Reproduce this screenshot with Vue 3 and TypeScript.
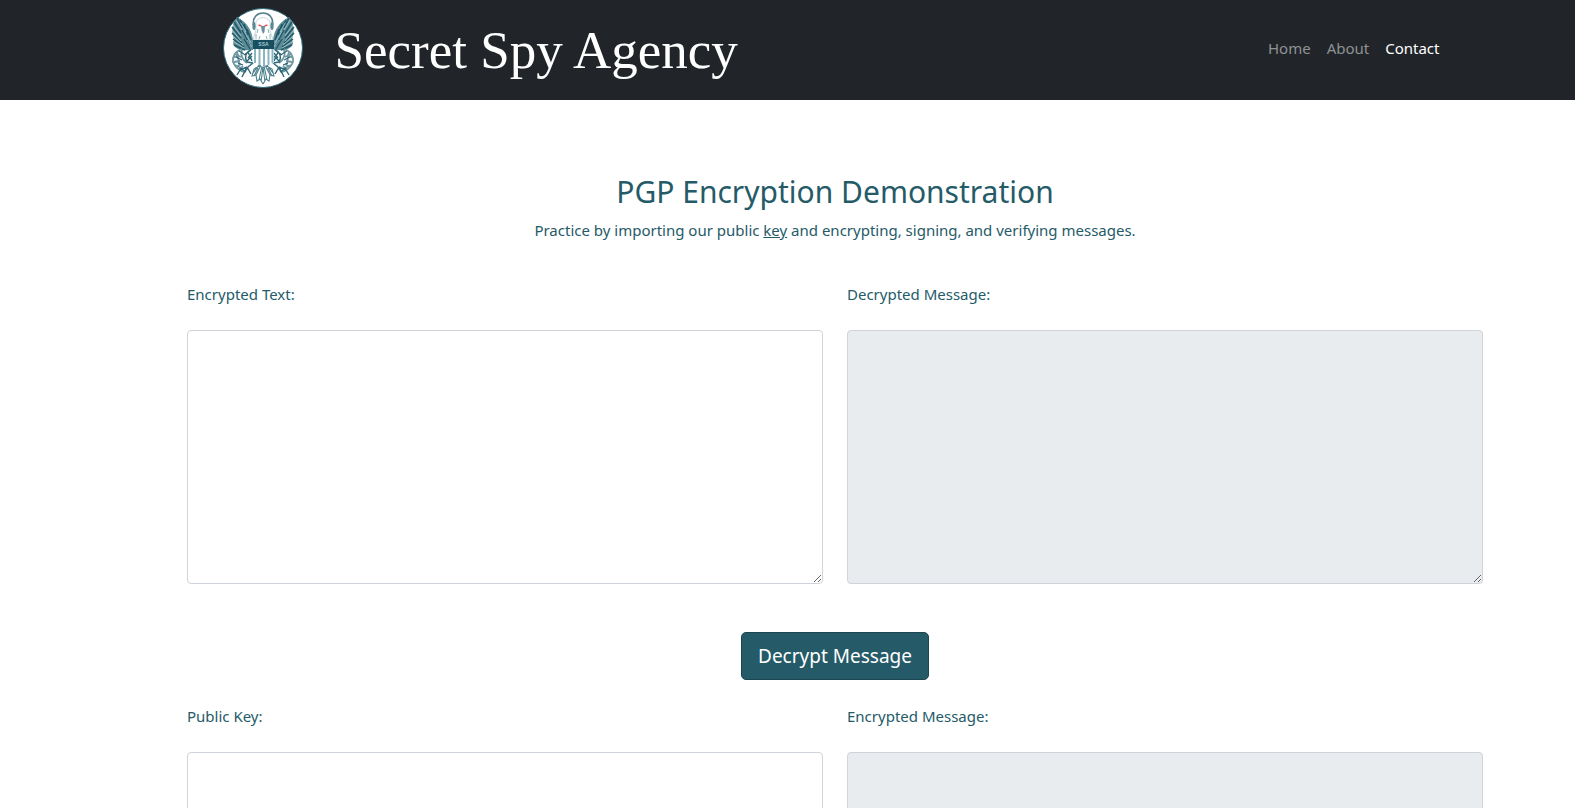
<script setup lang="ts">
import { ref } from 'vue'

interface NavItem {
  label: string
  active: boolean
}

const navItems: NavItem[] = [
  { label: 'Home', active: false },
  { label: 'About', active: false },
  { label: 'Contact', active: true },
]

const encryptedText = ref('')
const decryptedMessage = ref('')
const publicKey = ref('')
const encryptedMessage = ref('')
</script>

<template>
  <header class="navbar">
    <div class="nav-inner">
      <a class="brand" href="#">
        <svg class="seal" viewBox="0 0 80 80" aria-hidden="true">
          <defs>
            <g id="seal-half">
              <path d="M14 9 C9 15 8 24 11 31 L10 36 C13 42 19 43 30 42 L30 32 C29 23 24 14 14 9Z" fill="#5d8b96" />
              <path d="M14 10 L19 20 M11 14 L18 25 M9 19 L18 30 M9 25 L19 35 M10 31 L21 39 M11 37 L22 42 M17 12 L22 21 M21 16 L25 27 M24 21 L28 32 M19 22 L27 37 M21 31 L27 41" fill="none" stroke="#1f5868" stroke-width="1.4" />
              <path d="M13 12 L19 22 M10 17 L18 28 M9 22 L18 33 M10 28 L20 37 M11 34 L21 40 M21 23 L28 35 M18 15 L23 24 M24 32 L29 39" fill="none" stroke="#cfe0e4" stroke-width=".6" />
              <path d="M19 41 C12 43 9 49 10 54 C12 59 16 63 22 64 M14 44 C16 48 14 53 17 57 M19 42 C17 48 20 52 24 55 M10 50 L16 47 M11 54 L17 53 M13 59 L18 56 M16 62 L20 58 M12 46 L18 49 M12 57 L20 61" fill="none" stroke="#6f98a2" stroke-width="1.8" />
              <path d="M16 43 L21 46 M13 49 L19 52 M15 55 L20 57 M17 60 L23 64" fill="none" stroke="#2b6574" stroke-width="1.1" />
              <path d="M28 42 C23 44 21 49 24 54 L30 55 L25 59 L21 65 M29 48 L24 53 M25 44 L29 53 M21 47 L28 42 M24 59 L28 66 M24 59 L17 62 L14 67 M24 59 L19 69 M25 50 L29 45" fill="none" stroke="#2f6977" stroke-width="1.4" />
              <path d="M38 57 L31 61 L29 68 L33 67 L34 73 L37 71 L40 76 M38 57 L33 67 M39 58 L36 72 M36 57 L30 65 M40 59 L38 74 M35 60 L31 68" fill="none" stroke="#4c7f8b" stroke-width="1.1" />
            </g>
          </defs>
          <circle cx="40" cy="40" r="39.5" fill="#fff" stroke="#2e6978" />
          <use href="#seal-half" />
          <use href="#seal-half" transform="matrix(-1 0 0 1 80 0)" />
          <path d="M33 13 Q40 6 47 13 L47 22 L50 32 L30 32 L33 22Z" fill="#fff" stroke="#a8c3c9" stroke-width=".6" />
          <path d="M33 26 L33 31 M37 28 L36 31 M43 28 L44 31 M47 26 L47 31 M35 21 L34 25 M45 21 L46 25" fill="none" stroke="#74a0aa" stroke-width=".8" />
          <path d="M30.5 17 C28 1 52 1 49.500 17" fill="none" stroke="#537f8c" stroke-width="1.6" />
          <ellipse cx="31" cy="18" rx="1.6" ry="4" fill="#5a8994" />
          <ellipse cx="49" cy="18" rx="1.6" ry="4" fill="#5a8994" />
          <path d="M35.5 17 L38.5 18 M44.5 17 L41.5 18" stroke="#ef5a62" stroke-width="1.6" />
          <path d="M38 18 L42 18 L41.500 24 L40 26 L38.500 22Z" fill="#6b919c" />
          <path d="M30 39 H51 V55 Q45 57 40.500 58 Q36 57 30 55Z" fill="#fff" />
          <path d="M32 40V55 M36.500 40V57 M41 40V58 M45.500 40V57 M49.500 40V55" stroke="#8bb6c1" stroke-width="2" />
          <path d="M30 32 H51 V41 H30Z" fill="#174f60" />
          <text x="40.500" y="38" text-anchor="middle" class="seal-text">SSA</text>
        </svg>
        <span class="brand-name">Secret Spy Agency</span>
      </a>
      <nav class="links">
        <a v-for="item in navItems" :key="item.label" href="#" :class="{ active: item.active }">{{ item.label }}</a>
      </nav>
    </div>
  </header>

  <main class="page">
    <div class="container">
      <div class="intro">
        <h2>PGP Encryption Demonstration</h2>
        <p>Practice by importing our public <a href="#">key</a> and encrypting, signing, and verifying messages.</p>
      </div>
      <form class="tool" @submit.prevent>
        <div class="fields">
          <div class="field">
            <label for="encrypted-text">Encrypted Text:</label>
            <textarea id="encrypted-text" v-model="encryptedText" rows="10"></textarea>
          </div>
          <div class="field">
            <label for="decrypted-message">Decrypted Message:</label>
            <textarea id="decrypted-message" v-model="decryptedMessage" rows="10" readonly></textarea>
          </div>
        </div>
        <button type="submit">Decrypt Message</button>
      </form>
      <form class="tool" @submit.prevent>
        <div class="fields">
          <div class="field">
            <label for="public-key">Public Key:</label>
            <textarea id="public-key" v-model="publicKey" rows="10"></textarea>
          </div>
          <div class="field">
            <label for="encrypted-message">Encrypted Message:</label>
            <textarea id="encrypted-message" v-model="encryptedMessage" rows="10" readonly></textarea>
          </div>
        </div>
      </form>
    </div>
  </main>
</template>

<style>
html {
  scrollbar-width: none;
}
body {
  background: #fff;
}
#app {
  font-family: "Noto Sans", sans-serif;
  font-size: 15px;
  line-height: 24px;
  color: #255b68;
}
</style>

<style scoped>
.navbar {
  background: #212529;
  padding: 8px 0;
}
.nav-inner {
  box-sizing: border-box;
  max-width: 1320px;
  min-height: 84px;
  margin: 0 auto;
  padding-left: 95px;
  padding-right: 8px;
  display: flex;
  justify-content: space-between;
}
.brand {
  display: flex;
  gap: 32px;
  align-items: flex-start;
  color: #fff;
  text-decoration: none;
}
.seal {
  width: 80px;
  height: 80px;
}
.seal-text {
  font: bold 5px "Liberation Sans", sans-serif;
  fill: #a5c5cc;
}
.brand-name {
  font-family: "Liberation Serif", serif;
  font-size: 53px;
  line-height: 84px;
}
.links {
  display: flex;
  gap: 16px;
  align-items: center;
  height: 80px;
}
.links a {
  color: #909294;
  text-decoration: none;
}
.links a.active {
  color: #fff;
}
.page {
  padding: 72px 0 48px 95px;
}
.container {
  box-sizing: border-box;
  max-width: 1320px;
  margin: 0 auto;
  padding: 0 12px;
}
.intro {
  text-align: center;
  margin-bottom: 40px;
}
h2 {
  margin: 0 0 6px;
  font-size: 30px;
  line-height: 40px;
  font-weight: 400;
}
p {
  margin: 0;
}
p a {
  color: inherit;
}
.tool {
  display: flex;
  flex-direction: column;
  align-items: center;
  gap: 48px;
  margin-bottom: 24px;
}
.fields {
  width: 100%;
  display: grid;
  grid-template-columns: 1fr 1fr;
  gap: 24px;
}
.field {
  display: flex;
  flex-direction: column;
  gap: 24px;
}
textarea {
  box-sizing: border-box;
  width: 100%;
  margin: 0;
  padding: 6px 12px;
  border: 1px solid #ced4da;
  border-radius: 4px;
  background: #fff;
  color: #212529;
  font: inherit;
  resize: vertical;
}
textarea[readonly] {
  background: #e8ecef;
}
button {
  padding: 8px 16px;
  border: 1px solid #1d4652;
  border-radius: 5px;
  background: #255b68;
  color: #fff;
  font-family: inherit;
  font-size: 19px;
  line-height: 30px;
}
</style>
